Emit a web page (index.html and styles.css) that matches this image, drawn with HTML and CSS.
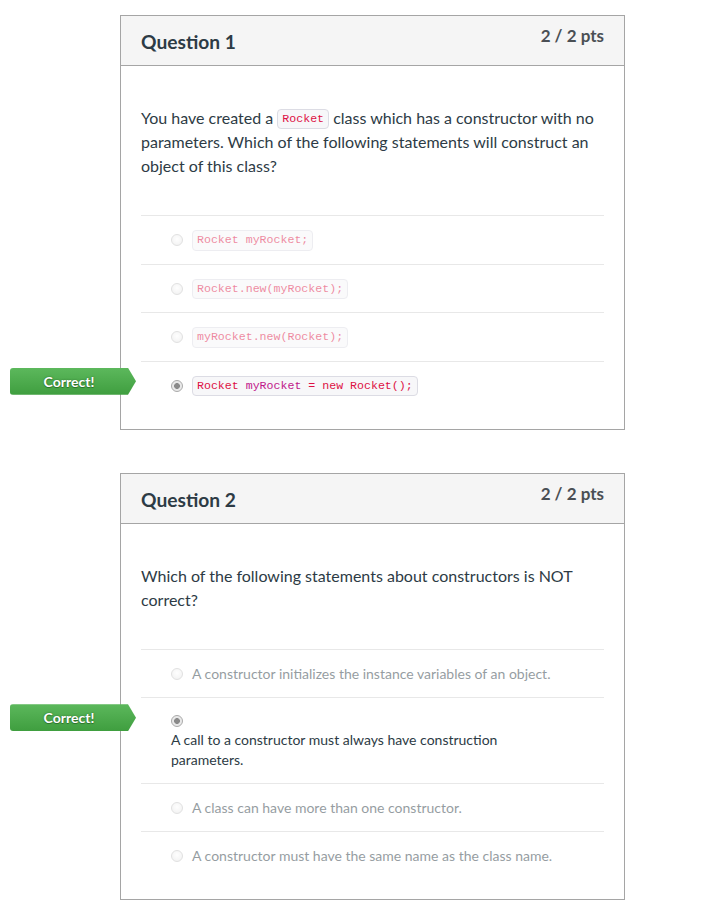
FILE: index.html
```html
<!DOCTYPE html>
<html>
<head>
<meta charset="utf-8">
<link rel="stylesheet" href="styles.css">
</head>
<body>
<div class="page">
  <div class="card">
    <div class="card-head">
      <div class="q-title">Question 1</div>
      <div class="q-pts">2 / 2 pts</div>
    </div>
    <div class="card-body">
      <div class="q-text">You have created a <code class="chip">Rocket</code> class which has a constructor with no parameters. Which of the following statements will construct an object of this class?</div>
      <div class="answers">
        <div class="answer faded">
          <div class="line"><span class="radio"></span><code class="chip">Rocket myRocket;</code></div>
        </div>
        <div class="answer faded">
          <div class="line"><span class="radio"></span><code class="chip">Rocket.new(myRocket);</code></div>
        </div>
        <div class="answer faded">
          <div class="line"><span class="radio"></span><code class="chip">myRocket.new(Rocket);</code></div>
        </div>
        <div class="answer">
          <span class="badge">Correct!</span>
          <div class="line"><span class="radio checked"></span><code class="chip">Rocket <span class="var">myRocket</span> = new Rocket();</code></div>
        </div>
      </div>
    </div>
  </div>

  <div class="card">
    <div class="card-head">
      <div class="q-title">Question 2</div>
      <div class="q-pts">2 / 2 pts</div>
    </div>
    <div class="card-body">
      <div class="q-text">Which of the following statements about constructors is NOT correct?</div>
      <div class="answers">
        <div class="answer faded">
          <div class="line"><span class="radio"></span><span class="a-text">A constructor initializes the instance variables of an object.</span></div>
        </div>
        <div class="answer">
          <span class="badge">Correct!</span>
          <div class="radio-line"><span class="radio checked"></span></div>
          <div class="a-block">A call to a constructor must always have construction parameters.</div>
        </div>
        <div class="answer faded">
          <div class="line"><span class="radio"></span><span class="a-text">A class can have more than one constructor.</span></div>
        </div>
        <div class="answer faded">
          <div class="line"><span class="radio"></span><span class="a-text">A constructor must have the same name as the class name.</span></div>
        </div>
      </div>
    </div>
  </div>
</div>
</body>
</html>
```

FILE: styles.css
```css
html, body {
  margin: 0;
  padding: 0;
  background: #ffffff;
}

body {
  font-family: Lato, "Open Sans", "Liberation Sans", sans-serif;
  color: #2d3b45;
}

.page {
  display: flex;
  flex-direction: column;
  gap: 43px;
  padding: 15px 0 0 120px;
}

.card {
  width: 505px;
  box-sizing: border-box;
  border: 1px solid #a5a5a5;
  background: #fff;
}

.card-head {
  display: flex;
  justify-content: space-between;
  align-items: flex-start;
  min-height: 49px;
  padding: 0 20px;
  background: #f5f5f5;
  border-bottom: 1px solid #a5a5a5;
}

.q-title {
  font-size: 19.2px;
  font-weight: 700;
  line-height: 24px;
  padding-top: 14px;
  color: #2d3b45;
}

.q-pts {
  font-size: 17px;
  font-weight: 700;
  line-height: 20px;
  padding-top: 10px;
  color: #4a4f54;
}

.card-body {
  padding: 40px 20px 20px;
}

.q-text {
  font-size: 16px;
  line-height: 24px;
  padding-bottom: 37px;
  color: #2d3b45;
}

.chip {
  display: inline-block;
  font-family: "Liberation Mono", "DejaVu Sans Mono", monospace;
  font-size: 11.6px;
  line-height: 16.5px;
  padding: 1px 4px;
  color: #dd1144;
  background: #f7f7f9;
  border: 1px solid #dcdce4;
  border-radius: 4px;
  vertical-align: middle;
}

.q-text .chip {
  position: relative;
  top: -1px;
}

.chip .var {
  color: #c0178a;
}

.answer {
  position: relative;
  border-top: 1px solid #e8e8e8;
  padding: 14px 0 13px 30px;
}

.line {
  display: flex;
  align-items: center;
  gap: 9px;
  min-height: 20px;
}

.faded .line {
  opacity: 0.5;
}

.radio {
  flex: none;
  display: inline-block;
  width: 12px;
  height: 12px;
  box-sizing: border-box;
  border-radius: 50%;
  border: 1px solid #c4c4c4;
  background: radial-gradient(circle at 50% 40%, #ffffff 0%, #eeeeee 60%, #dddddd 100%);
}

.radio.checked {
  border-color: #a9a9a9;
  background: radial-gradient(circle, #8a8a8a 0, #8a8a8a 2.6px, #e6e6e6 3.2px, #f2f2f2 100%);
}

.a-text {
  font-size: 14px;
  line-height: 20px;
  color: #2d3b45;
}

.radio-line {
  display: flex;
  align-items: center;
  height: 18px;
}

.a-block {
  font-size: 14px;
  line-height: 20px;
  color: #2d3b45;
  padding-right: 100px;
}

.badge {
  position: absolute;
  left: -131px;
  top: 6px;
  width: 126px;
  height: 27px;
  box-sizing: border-box;
  padding-right: 8px;
  display: flex;
  align-items: center;
  justify-content: center;
  font-size: 14px;
  font-weight: 700;
  color: #ffffff;
  text-shadow: 0 0 2px #2d6d2d, 0 1px 0 #2f7a2f;
  background: linear-gradient(#5cb85c, #3f9e3f);
  border-radius: 3px;
  clip-path: polygon(0 0, calc(100% - 8px) 0, 100% 50%, calc(100% - 8px) 100%, 0 100%);
}
```
